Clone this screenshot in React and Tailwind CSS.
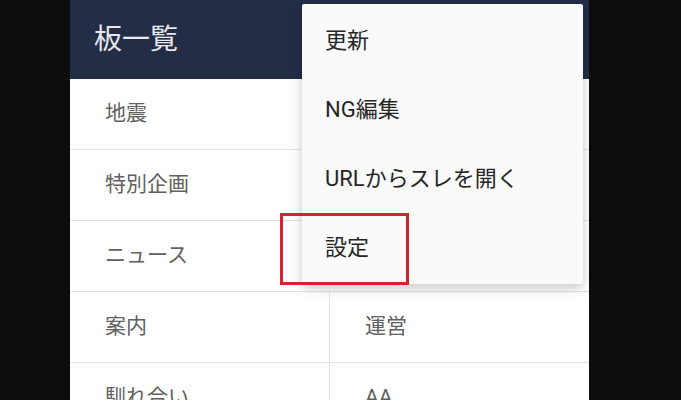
import React from 'react';

const font = { fontFamily: 'Roboto, "Noto Sans CJK JP", "Noto Sans", sans-serif' };

const fullRows = ['地震', '特別企画', 'ニュース'];
const pairRows = [['案内', '運営'], ['馴れ合い', 'AA']];
const menuItems = ['更新', 'NG編集', 'URLからスレを開く', '設定'];

export default function App() {
    return (
        <div className="w-[681px] h-[400px] bg-[#0d0d0d] overflow-hidden pl-[70px]" style={font}>
            <div className="relative w-[519px] h-[400px] bg-white">
                {/* Header */}
                <div className="h-[79px] bg-[#232d46] flex items-center pl-[24px]">
                    <span className="text-[28px] text-[#e6e8ee]">板一覧</span>
                </div>

                {/* Board list */}
                {fullRows.map((name) => (
                    <div key={name} className="h-[71px] border-b border-[#e2e2e2] flex items-center pl-[35px]">
                        <span className="text-[21px] text-[#606060]">{name}</span>
                    </div>
                ))}
                {pairRows.map(([a, b]) => (
                    <div key={a} className="h-[71px] border-b border-[#e2e2e2] grid grid-cols-[260px_1fr]">
                        <div className="flex items-center pl-[35px] border-r border-[#e2e2e2]">
                            <span className="text-[21px] text-[#606060]">{a}</span>
                        </div>
                        <div className="flex items-center pl-[35px]">
                            <span className="text-[21px] text-[#606060]">{b}</span>
                        </div>
                    </div>
                ))}

                {/* Overflow menu */}
                <div className="absolute left-[232px] top-[4px] w-[281px] bg-[#fafafa] rounded-[2px] shadow-[0_4px_12px_rgba(0,0,0,0.22)] py-[2px]">
                    {menuItems.map((item) => (
                        <div key={item} className="h-[69px] flex items-center pl-[23px]">
                            <span className="text-[22px] text-[#262626]">{item}</span>
                        </div>
                    ))}
                </div>

                {/* Highlight */}
                <div className="absolute left-[210px] top-[213px] w-[129px] h-[72px] border-[3px] border-[#d8222e]" />
            </div>
        </div>
    );
}
